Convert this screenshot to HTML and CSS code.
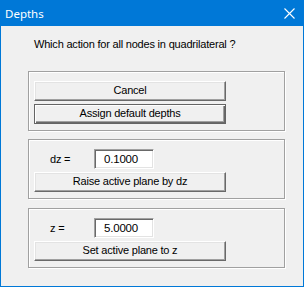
FILE: index.html
```html
<!DOCTYPE html>
<html lang="en">
<head>
  <meta charset="UTF-8">
  <title>Depths</title>
  <link rel="stylesheet" href="styles.css">
</head>
<body>

  <div class="dialog">
    <div class="titleBar">
      <span class="titleText">Depths</span>
      <svg class="closeIcon" width="11" height="11" viewBox="0 0 11 11">
        <path d="M0.5 0.5 L10.5 10.5 M10.5 0.5 L0.5 10.5" stroke="#fff" stroke-width="1.1" fill="none"/>
      </svg>
    </div>

    <div class="client">
      <div class="question">Which action for all nodes in quadrilateral ?</div>

      <div class="groupBox firstGroup">
        <div class="winButton">Cancel</div>
        <div class="winButton defaultButton">Assign default depths</div>
      </div>

      <div class="groupBox">
        <div class="valueRow">
          <span class="valueLabel">dz =</span>
          <div class="editBox">0.1000</div>
        </div>
        <div class="winButton">Raise active plane by dz</div>
      </div>

      <div class="groupBox lastGroup">
        <div class="valueRow">
          <span class="valueLabel">z =</span>
          <div class="editBox">5.0000</div>
        </div>
        <div class="winButton">Set active plane to z</div>
      </div>
    </div>
  </div>

</body>
</html>
```

FILE: styles.css
```css
body {
  margin: 0;
  background-color: #f0f0f0;
  font-family: "Liberation Sans", Arial, sans-serif;
  font-size: 11px;
  letter-spacing: -0.2px;
  color: #000;
}

.dialog {
  width: 304px;
  height: 287px;
  box-sizing: border-box;
  border: 1px solid #0078d7;
  border-top: none;
  background-color: #f0f0f0;
  display: flex;
  flex-direction: column;
}

.titleBar {
  height: 26px;
  background-color: #0078d7;
  display: flex;
  align-items: center;
  justify-content: space-between;
  padding: 0 9px 0 5px;
  margin: 0 -1px;
}

.titleText {
  font-family: "Noto Sans", sans-serif;
  font-size: 11.5px;
  letter-spacing: 0;
  color: #fff;
  margin-top: 1px;
}

.closeIcon {
  display: block;
  margin-top: 1px;
}

.client {
  display: flex;
  flex-direction: column;
  padding-left: 27px;
}

.question {
  margin: 12px 0 0 6px;
  line-height: 13px;
  height: 13px;
}

.groupBox {
  width: 257px;
  height: 60px;
  box-sizing: border-box;
  border: 1px solid #a0a0a0;
  box-shadow: inset 1px 1px 0 #fff, 1px 1px 0 #fff;
  padding: 9px 0 0 5px;
  margin-top: 8px;
  display: flex;
  flex-direction: column;
  gap: 3px;
}

.firstGroup {
  margin-top: 20px;
}

.lastGroup {
  margin-top: 9px;
}

.winButton {
  width: 192px;
  height: 20px;
  box-sizing: border-box;
  border: 1px solid;
  border-color: #fff #696969 #696969 #fff;
  box-shadow: inset -1px -1px 0 #a0a0a0, inset 1px 1px 0 #e3e3e3;
  background-color: #f0f0f0;
  text-align: center;
  line-height: 17px;
}

.defaultButton {
  border-color: #646464;
  box-shadow: inset 1px 1px 0 #fff, inset -1px -1px 0 #696969, inset -2px -2px 0 #a0a0a0;
}

.valueRow {
  display: flex;
  align-items: center;
  height: 20px;
}

.valueLabel {
  width: 44px;
  margin-left: 16px;
}

.editBox {
  width: 60px;
  height: 20px;
  box-sizing: border-box;
  border: 1px solid;
  border-color: #a0a0a0 #fff #fff #a0a0a0;
  box-shadow: inset 1px 1px 0 #696969, inset -1px -1px 0 #e3e3e3;
  background-color: #fff;
  padding-left: 9px;
  line-height: 18px;
  font-size: 11.5px;
}
```
